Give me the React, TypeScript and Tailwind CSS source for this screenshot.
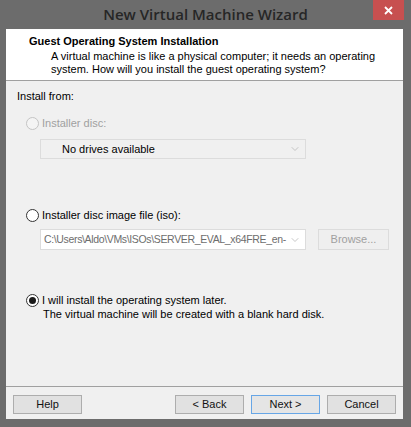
import { ChevronDown } from "lucide-react";

const ui = { fontFamily: "Tahoma, 'Liberation Sans', 'DejaVu Sans', sans-serif" };

function Radio({ checked, disabled }: { checked?: boolean; disabled?: boolean }) {
  return (
    <span
      className={`flex h-[13px] w-[13px] shrink-0 items-center justify-center rounded-full border ${
        disabled ? "border-[#c4c4c4] bg-[#f4f4f4]" : "border-[#333333] bg-white"
      }`}
    >
      {checked && <span className="h-[7px] w-[7px] rounded-full bg-[#1a1a1a]" />}
    </span>
  );
}

function Button({ label, primary }: { label: string; primary?: boolean }) {
  return (
    <div
      className={`flex h-[19px] w-[69px] items-center justify-center border text-[11px] text-[#111] ${
        primary ? "border-[#67a6e6] bg-[#e5e5e5]" : "border-[#adadad] bg-[#e1e1e1]"
      }`}
    >
      {label}
    </div>
  );
}

export default function App() {
  return (
    <div className="flex h-[427px] w-[411px] flex-col bg-[#6c6c6c]" style={ui}>
      {/* title bar */}
      <div className="grid h-[29px] grid-cols-[1fr_auto_1fr]">
        <div />
        <div
          className="pt-[3px] text-[15px] font-semibold text-[#262626]"
          style={{ fontFamily: "'Open Sans', 'Noto Sans', sans-serif" }}
        >
          New Virtual Machine Wizard
        </div>
        <div className="flex justify-end pr-[7px]">
          <div className="flex h-[20px] w-[31px] items-center justify-center bg-[#c75050]">
            <svg width="9" height="9" viewBox="0 0 9 9">
              <path d="M1 1 L8 8 M8 1 L1 8" stroke="white" strokeWidth="1.8" />
            </svg>
          </div>
        </div>
      </div>

      {/* client area */}
      <div className="ml-[6px] mr-[8px] flex h-[390px] flex-col bg-[#f0f0f0]">
        <div className="h-[52px] border-b border-[#a0a0a0] bg-white pl-[23px] pt-[6px] text-[11px] leading-[13px] text-black">
          <div className="font-bold">Guest Operating System Installation</div>
          <div className="mt-[2px] pl-[22px]">
            A virtual machine is like a physical computer; it needs an operating
            <br />
            system. How will you install the guest operating system?
          </div>
        </div>

        <div className="flex-1 pl-[11px] text-[11px] leading-[13px] text-black">
          <div className="mt-[9px]">Install from:</div>

          <div className="ml-[9px] mt-[14px] flex items-center gap-[3px] text-[#a0a0a0]">
            <Radio disabled />
            <span>Installer disc:</span>
          </div>
          <div className="ml-[23px] mt-[9px] flex h-[20px] w-[266px] items-center border border-[#dcdcdc] bg-[#f0f0f0] pl-[21px] pr-[4px]">
            <span className="flex-1">No drives available</span>
            <ChevronDown size={12} strokeWidth={1.5} className="text-[#b4b4b4]" />
          </div>

          <div className="ml-[9px] mt-[50px] flex items-center gap-[3px]">
            <Radio />
            <span>Installer disc image file (iso):</span>
          </div>
          <div className="ml-[23px] mt-[7px] flex items-center gap-[12px]">
            <div className="flex h-[21px] w-[266px] items-center border border-[#dcdcdc] bg-white pl-[3px] pr-[4px]">
              <span className="flex-1 whitespace-nowrap text-[10.5px] tracking-[-0.35px] text-[#6d6d6d]">
                C:\Users\Aldo\VMs\ISOs\SERVER_EVAL_x64FRE_en-
              </span>
              <ChevronDown size={12} strokeWidth={1.5} className="ml-[2px] shrink-0 text-[#b4b4b4]" />
            </div>
            <div className="flex h-[21px] w-[71px] items-center justify-center border border-[#dcdcdc] bg-[#efefef] text-[#a0a0a0]">
              Browse...
            </div>
          </div>

          <div className="ml-[9px] mt-[44px] flex items-center gap-[3px]">
            <Radio checked />
            <span>I will install the operating system later.</span>
          </div>
          <div className="ml-[26px] mt-[1px]">The virtual machine will be created with a blank hard disk.</div>
        </div>

        <div className="flex h-[33px] items-start border-t border-[#a0a0a0] pl-[7px] pr-[7px] pt-[8px]">
          <Button label="Help" />
          <div className="flex-1" />
          <div className="flex gap-[7px]">
            <Button label="< Back" />
            <Button label="Next >" primary />
            <Button label="Cancel" />
          </div>
        </div>
      </div>
    </div>
  );
}
